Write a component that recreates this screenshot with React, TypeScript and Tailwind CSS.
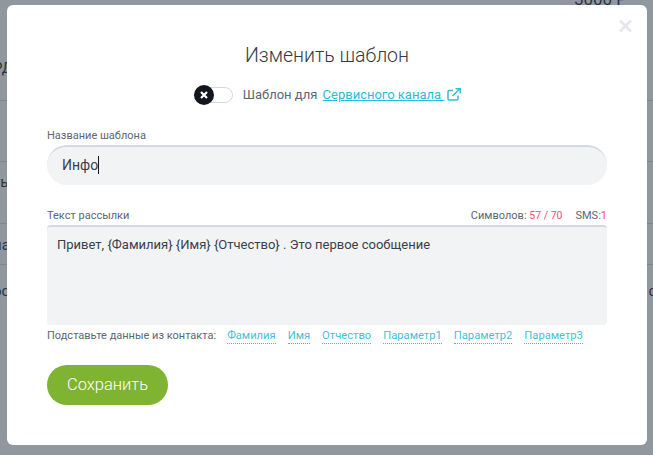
import React from "react";

function BgRow({ h, pt, left, right, line = true }: { h: string; pt: string; left?: string; right?: string; line?: boolean }) {
  return (
    <div className={`${h} ${pt} flex items-start justify-between ${line ? "border-b border-[#7f858d]" : ""} text-[15px] leading-[20px] text-[#2c3340]`}>
      <span className="-ml-[7px]">{left}</span>
      <span className="-mr-1">{right}</span>
    </div>
  );
}

function Chip({ children }: { children: React.ReactNode }) {
  return <span className="border-b border-dotted border-[#38bcd8] text-[11.2px] text-[#45bfdc] leading-[14px]">{children}</span>;
}

export default function App() {
  return (
    <div className="relative h-[455px] w-[653px] overflow-hidden bg-[#91979e] font-['Roboto','Noto_Sans',sans-serif]">
      <div className="flex flex-col">
        <div className="flex h-[5px] justify-end pr-[26px] text-[17px] leading-[5px] text-[#2c3340]">
          <span className="-translate-y-[3px]">5000 Р</span>
        </div>
        <BgRow h="h-[96px]" pt="pt-[53px]" left="РД" />
        <BgRow h="h-[61px]" pt="pt-0" />
        <BgRow h="h-[62px]" pt="pt-[10px]" left="ть" />
        <BgRow h="h-[41px]" pt="pt-[11px]" left="на" />
        <BgRow h="h-[50px]" pt="pt-[16px]" left="ос" right="о" line={false} />
      </div>

      <div className="absolute left-[7px] top-[5px] flex h-[440px] w-[640px] flex-col rounded-md bg-white px-10 pt-[34px] text-[#5c6675]">
        <svg className="absolute right-[15px] top-[15px] h-[12px] w-[13px] text-[#e3e7ec]" viewBox="0 0 13 12" fill="none" stroke="currentColor" strokeWidth="2.6">
          <path d="M1 .5l11 11M12 .5 1 11.5" />
        </svg>

        <h1 className="h-[34px] text-center text-[19.5px] font-light leading-[34px] text-[#333a45]">Изменить шаблон</h1>

        <div className="mt-[12px] flex h-[20px] items-center justify-center pl-[1px] text-[13px]">
          <div className="relative mr-[10px] h-[16px] w-[39px] rounded-full border border-[#d3d9e2] bg-white">
            <span className="absolute -left-px -top-[3px] flex h-5 w-5 items-center justify-center rounded-full bg-[#12171f]">
              <svg className="h-[8px] w-[8px]" viewBox="0 0 8 8" fill="none" stroke="white" strokeWidth="2.2">
                <path d="M1 1l6 6M7 1L1 7" />
              </svg>
            </span>
          </div>
          <span className="whitespace-pre">Шаблон для </span>
          <a className="ml-[2px] whitespace-pre text-[#2bbcd9] underline">Сервисного канала </a>
          <svg className="ml-[3px] mb-[2px] h-[13px] w-[14px]" viewBox="0 0 14 13" fill="none" stroke="#38bcd8" strokeWidth="1.5">
            <path d="M6 2.5H2.2a1.2 1.2 0 0 0-1.2 1.2v7a1.2 1.2 0 0 0 1.2 1.2h7.6a1.2 1.2 0 0 0 1.2-1.2V7.5" />
            <path d="M5.5 8 12.5 1M8.5.8h4.7v4.7" />
          </svg>
        </div>

        <label className="mt-[23px] h-[16px] text-[11px] leading-[16px]">Название шаблона</label>
        <div className="mt-[1px] flex h-10 items-center rounded-full border-t-2 border-[#d3d9e2] bg-[#f2f3f5] pb-[2px] pl-[15px] text-[14px] text-[#3a404b]">
          Инфо<span className="h-[18px] w-px bg-[#12171f]" />
        </div>

        <div className="mt-[23px] flex h-[16px] items-center justify-between text-[11px] leading-[16px]">
          <span>Текст рассылки</span>
          <span className="whitespace-pre">
            Символов: <span className="text-[10.5px] text-[#ff4d6d]">57 / 70</span>
            <span className="ml-[13px]">SMS:</span>
            <span className="text-[#ff4d6d]">1</span>
          </span>
        </div>
        <div className="mt-[1px] h-[100px] rounded border-t-2 border-[#d3d9e2] bg-[#f2f3f5] px-[10px] pt-[8px] text-[13px] leading-[20px] text-[#3a404b]">
          Привет, {"{Фамилия}"} {"{Имя}"} {"{Отчество}"} . Это первое сообщение
        </div>

        <div className="mt-[3px] flex h-[16px] items-center text-[11px]">
          <span className="mr-[11px]">Подставьте данные из контакта:</span>
          <div className="flex gap-3">
            <Chip>Фамилия</Chip>
            <Chip>Имя</Chip>
            <Chip>Отчество</Chip>
            <Chip>Параметр1</Chip>
            <Chip>Параметр2</Chip>
            <Chip>Параметр3</Chip>
          </div>
        </div>

        <button className="mt-[21px] h-10 w-[121px] rounded-full bg-[#7fb432] text-[16.5px] font-light text-white">Сохранить</button>
      </div>
    </div>
  );
}
